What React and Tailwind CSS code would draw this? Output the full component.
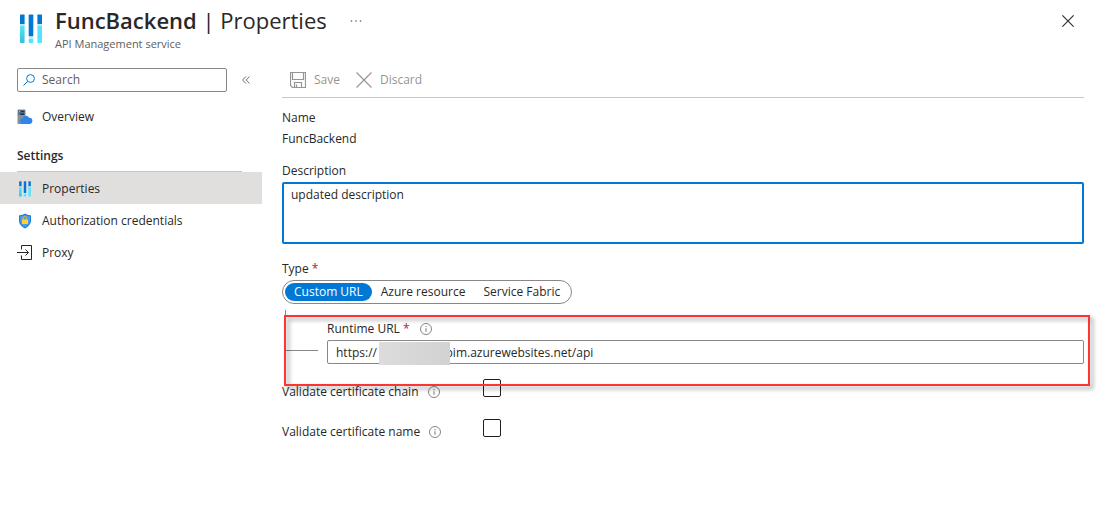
import { useState } from "react";

const HOST_GAP = "\u00a0".repeat(22);

function ApiManagementIcon({ className }) {
  return (
    <svg className={className} viewBox="0 0 22 30" fill="none" aria-hidden="true">
      <defs>
        <linearGradient id="apim-cyan" x1="0" y1="0" x2="0" y2="1">
          <stop offset="0" stopColor="#50e6ff" />
          <stop offset="1" stopColor="#32bedd" />
        </linearGradient>
      </defs>
      <rect x="0" y="0.5" width="4.6" height="10" rx="0.8" fill="#0078d4" />
      <rect x="0" y="10" width="4.6" height="1.4" fill="#d5dde5" />
      <rect x="0" y="11.6" width="4.6" height="17.4" rx="1" fill="url(#apim-cyan)" />
      <rect x="8.7" y="0.5" width="4.6" height="22" rx="0.8" fill="#0078d4" />
      <rect x="8.7" y="22.5" width="4.6" height="1.4" fill="#d5dde5" />
      <rect x="8.7" y="24.4" width="4.6" height="4.6" rx="1" fill="#50e6ff" />
      <rect x="17.4" y="0.5" width="4.6" height="10" rx="0.8" fill="#0078d4" />
      <rect x="17.4" y="10" width="4.6" height="1.4" fill="#d5dde5" />
      <rect x="17.4" y="11.6" width="4.6" height="17.4" rx="1" fill="#50e6ff" />
    </svg>
  );
}

function ServerCloudIcon() {
  return (
    <svg className="h-4 w-4" viewBox="0 0 16 16" aria-hidden="true">
      <rect x="0.5" y="0.5" width="8" height="14.5" rx="0.6" fill="#8a8f96" />
      <rect x="1.5" y="1.6" width="6" height="1.8" fill="#12385c" />
      <rect x="1.5" y="4.2" width="6" height="1.8" fill="#12385c" />
      <rect x="1.9" y="2" width="1.4" height="1" fill="#50e6ff" />
      <rect x="1.9" y="4.6" width="1.4" height="1" fill="#50e6ff" />
      <path
        d="M5.500 15a2.900 2.900 0 0 1-.3-5.700A3.900 3.900 0 0 1 12.200 8.800a3.100 3.100 0 0 1 .2 6.200z"
        fill="#2f86ea"
      />
    </svg>
  );
}

function ShieldIcon() {
  return (
    <svg className="h-4 w-4" viewBox="0 0 16 16" aria-hidden="true">
      <path
        d="M8 .5c1.700 1.300 3.600 1.700 6 1.800v5.200c0 3.500-2.600 6-6 8-3.400-2-6-4.500-6-8V2.300C4.400 2.200 6.300 1.800 8 .5z"
        fill="#1b7bd6"
      />
      <path
        d="M8 1.700c1.500 1 3 1.400 5 1.500v4.300c0 3-2.200 5-5 6.800-2.800-1.800-5-3.800-5-6.800V3.200c2-.1 3.500-.5 5-1.500z"
        fill="#4a9cea"
      />
      <path d="M6.100 7V5.600a1.900 1.900 0 0 1 3.800 0V7" fill="none" stroke="#f5b800" strokeWidth="1.100" />
      <rect x="5" y="6.600" width="6" height="4.400" rx="0.500" fill="#ffd02f" />
    </svg>
  );
}

function ProxyIcon() {
  return (
    <svg className="h-4 w-4" viewBox="0 0 16 16" fill="none" stroke="#252423" aria-hidden="true">
      <path d="M4.500 4.500v-4h10v14h-10v-4" />
      <path d="M0 7.500h11M8.500 4.500l3 3-3 3" />
    </svg>
  );
}

function SearchIcon() {
  return (
    <svg className="h-3 w-3" viewBox="0 0 12 12" fill="none" stroke="#0078d4" aria-hidden="true">
      <circle cx="7.500" cy="4.500" r="3.900" />
      <path d="M4.700 7.300L.5 11.500" />
    </svg>
  );
}

function SaveIcon() {
  return (
    <svg className="h-4 w-4" viewBox="0 0 16 16" fill="none" stroke="#979593" aria-hidden="true">
      <path d="M.5.500h15v15h-13l-2-2z" strokeWidth="1.200" />
      <path d="M2.500.500v7h11v-7M4.500 15.500v-5h7v5M6.500 12.500v3" strokeWidth="1.200" />
    </svg>
  );
}

function CrossIcon({ className }) {
  return (
    <svg className={className} viewBox="0 0 16 16" fill="none" stroke="currentColor" aria-hidden="true">
      <path
        d="M.5.500l15 15M15.500.500l-15 15"
        strokeWidth="1.200"
        vectorEffect="non-scaling-stroke"
      />
    </svg>
  );
}

function InfoIcon() {
  return (
    <svg className="h-3 w-3 shrink-0" viewBox="0 0 12 12" fill="none" stroke="#797775" aria-hidden="true">
      <circle cx="6" cy="6" r="5.500" strokeWidth="0.900" />
      <path d="M6 5.200v3.600M6 3v1.200" />
    </svg>
  );
}

const settings = [
  { label: "Properties", icon: <ApiManagementIcon className="mx-0.5 h-4 w-3" />, active: true },
  { label: "Authorization credentials", icon: <ShieldIcon /> },
  { label: "Proxy", icon: <ProxyIcon /> },
];

function NavItem({ label, icon, active }) {
  return (
    <a
      href="#"
      aria-current={active ? "page" : undefined}
      className={`flex h-8 items-center gap-[9px] pt-0.5 pl-[17px] ${active ? "bg-[#e1dfdd]" : ""}`}
    >
      {icon}
      <span>{label}</span>
    </a>
  );
}

function Sidebar() {
  return (
    <nav className="w-[262px] shrink-0 pt-2">
      <div className="flex items-center pl-[17px]">
        <label className="flex h-6 w-[210px] items-center gap-[7px] rounded-xs border border-[#8a8886] px-[5px]">
          <SearchIcon />
          <input
            type="search"
            aria-label="Search"
            placeholder="Search"
            className="min-w-0 flex-1 outline-none placeholder:text-[#605e5c]"
          />
        </label>
        <button type="button" aria-label="Collapse menu" className="ml-[15px]">
          <svg className="h-2 w-2" viewBox="0 0 8 8" fill="none" stroke="#605e5c" aria-hidden="true">
            <path d="M3.900.500L.5 4l3.400 3.500M7.600.500L4.200 4l3.400 3.500" strokeWidth="0.900" />
          </svg>
        </button>
      </div>
      <div className="pt-2">
        <NavItem label="Overview" icon={<ServerCloudIcon />} />
      </div>
      <h2 className="mr-5 ml-[17px] flex h-10 items-center border-b border-[#c8c6c4] pt-2 font-semibold">
        Settings
      </h2>
      {settings.map((item) => (
        <NavItem key={item.label} {...item} />
      ))}
    </nav>
  );
}

function TypePicker() {
  const options = ["Custom URL", "Azure resource", "Service Fabric"];
  const [selected, setSelected] = useState(options[0]);
  return (
    <fieldset>
      <legend className="h-5 leading-5">
        Type <span className="text-[#a4262c]">*</span>
      </legend>
      <div className="mt-px inline-flex h-6 items-center rounded-full border border-[#8a8886] px-0.5">
        {options.map((option) => (
          <label
            key={option}
            className={`flex h-[18px] cursor-pointer items-center rounded-full px-[9px] ${
              selected === option ? "bg-[#0078d4] text-white" : ""
            }`}
          >
            <input
              type="radio"
              name="type"
              className="sr-only"
              checked={selected === option}
              onChange={() => setSelected(option)}
            />
            {option}
          </label>
        ))}
      </div>
    </fieldset>
  );
}

function CheckRow({ id, label }) {
  return (
    <div className="flex h-10 items-start">
      <div className="flex h-6 w-[201px] items-center gap-[9px] pt-0.5">
        <label htmlFor={id}>{label}</label>
        <InfoIcon />
      </div>
      <input
        id={id}
        type="checkbox"
        className="h-[18px] w-[18px] appearance-none rounded-xs border border-[#201f1e] checked:bg-[#0078d4]"
      />
    </div>
  );
}

export default function App() {
  return (
    <div className="min-h-screen bg-white font-['Open_Sans','Noto_Sans',sans-serif] text-[12px] leading-4 text-[#292827]">
      <header className="flex h-15 items-start pr-6 pl-5">
        <ApiManagementIcon className="mt-3.5 h-[30px] w-[22px]" />
        <div className="ml-[13px] pt-[5px]">
          <h1 className="text-[22px] leading-[30px]">
            <span className="font-semibold">FuncBackend</span> | Properties
          </h1>
          <p className="pt-px text-[11px] leading-4 text-[#605e5c]">API Management service</p>
        </div>
        <button type="button" aria-label="More" className="mt-5 ml-[23px]">
          <svg className="h-0.5 w-3" viewBox="0 0 12 2" fill="#605e5c" aria-hidden="true">
            <circle cx="1.500" cy="1" r="0.800" />
            <circle cx="6" cy="1" r="0.800" />
            <circle cx="10.500" cy="1" r="0.800" />
          </svg>
        </button>
        <button type="button" aria-label="Close" className="mt-[15px] ml-auto text-[#323130]">
          <CrossIcon className="h-3 w-3" />
        </button>
      </header>

      <div className="flex">
        <Sidebar />
        <main className="min-w-0 flex-1 pr-3.5 pl-5">
          <div className="flex h-[38px] items-center gap-4 border-b border-[#c8c6c4] pt-0.5 pl-2 text-[#979593]">
            <button type="button" disabled className="flex items-center gap-2">
              <SaveIcon />
              Save
            </button>
            <button type="button" disabled className="flex items-center gap-2">
              <CrossIcon className="h-4 w-4" />
              Discard
            </button>
          </div>

          <dl className="pt-[11px]">
            <dt className="h-[21px] leading-[18px]">Name</dt>
            <dd className="h-[21px] leading-[18px]">FuncBackend</dd>
          </dl>

          <div className="mt-[11px]">
            <label htmlFor="description" className="block h-5 leading-[18px]">
              Description
            </label>
            <textarea
              id="description"
              defaultValue="updated description"
              className="block h-[62px] w-full resize-none rounded-xs border-2 border-[#0078d4] px-[7px] py-[3px] outline-none"
            />
          </div>

          <div className="mt-[15px]">
            <TypePicker />
          </div>

          <div className="relative mt-1.5 flex">
            <div className="ml-[3px] h-[41px] w-[33px] border-b border-l border-[#8a8886]" />
            <div className="ml-[9px] min-w-0 flex-1 pt-2">
              <div className="flex h-[22px] items-center gap-2.5">
                <label htmlFor="runtime-url">
                  Runtime URL <span className="text-[#a4262c]">*</span>
                </label>
                <InfoIcon />
              </div>
              <div className="relative">
                <input
                  id="runtime-url"
                  type="text"
                  defaultValue={`https://${HOST_GAP}pim.azurewebsites.net/api`}
                  className="block h-6 w-full rounded-xs border border-[#8a8886] px-2 outline-none"
                />
                <div className="absolute top-0.5 left-[52px] h-[23px] w-[71px] bg-linear-to-r from-[#dcdcdc] to-[#d2d2d2]" />
              </div>
            </div>
            <div className="pointer-events-none absolute top-[5px] -right-1.5 left-0.5 h-[71px] border-2 border-[#fb3434] drop-shadow-[3px_3px_2px_rgba(0,0,0,0.4)]" />
          </div>

          <div className="pt-[15px]">
            <CheckRow id="validate-chain" label="Validate certificate chain" />
            <CheckRow id="validate-name" label="Validate certificate name" />
          </div>
        </main>
      </div>
    </div>
  );
}
